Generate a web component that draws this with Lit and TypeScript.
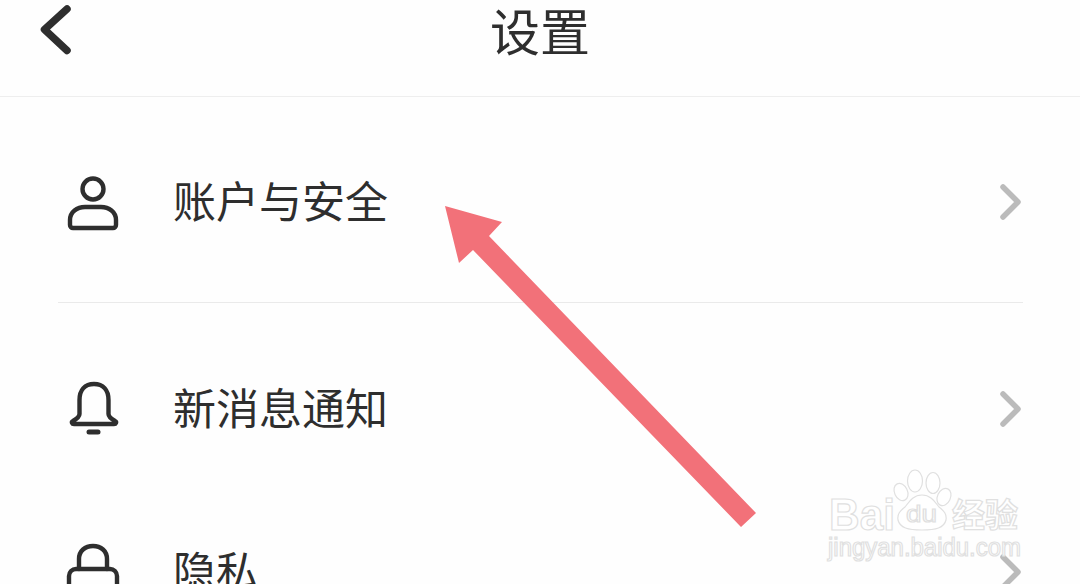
import { LitElement, css, html, svg } from 'lit'
import { customElement } from 'lit/decorators.js'

const personIcon = svg`<circle cx="29" cy="17" r="10.5"/><path d="M9 56h40a3 3 0 0 0 3-3v-5c0-8-7-13-15-13H21c-8 0-15 5-15 13v5a3 3 0 0 0 3 3z"/>`
const bellIcon = svg`<path d="M15.5 35V21c0-10 5.500-16 14.500-16s14.500 6 14.500 16v14c0 3 3 5 6.500 7 2 1 1 3-1 3H10c-2 0-3-2-1-3 3.500-2 6.500-4 6.500-7z"/><path d="M25 53h9" stroke-width="5"/>`
const lockIcon = svg`<path d="M15 27V17c0-8 6-13 14-13s14 5 14 13v10"/><rect x="5" y="27" width="48" height="40" rx="7"/>`

const rows = [
  { label: '账户与安全', icon: personIcon, cls: 'first' },
  { label: '新消息通知', icon: bellIcon, cls: 'second' },
  { label: '隐私', icon: lockIcon, cls: 'third' },
]

@customElement('app-root')
export class AppRoot extends LitElement {
  static styles = css`
    :host {
      display: block;
      position: relative;
      width: 1080px;
      height: 584px;
      overflow: hidden;
      background: #fefefe;
      color: #2e2e2e;
      font-family: "Noto Sans CJK SC", "Liberation Sans", sans-serif;
    }
    .bar {
      height: 96px;
      border-bottom: 1px solid #eee;
      display: flex;
      justify-content: center;
      position: relative;
    }
    .bar h1 {
      margin: 0;
      font-size: 50px;
      font-weight: 400;
      line-height: 58px;
    }
    .back {
      position: absolute;
      left: 30px;
      top: 0;
    }
    .row {
      display: flex;
      align-items: center;
      padding: 0 50px 0 64px;
    }
    .first { height: 200px; padding-top: 5px; }
    .second { height: 212px; }
    .third { height: 113px; }
    .icon {
      width: 60px;
      height: 60px;
      flex: none;
      overflow: visible;
      fill: none;
      stroke: #2e2e2e;
      stroke-width: 4.4;
      stroke-linecap: round;
      stroke-linejoin: round;
    }
    .label {
      margin-left: 49px;
      padding-bottom: 5px;
      flex: 1;
      font-size: 43px;
      line-height: 55px;
      font-weight: 400;
    }
    .more {
      width: 40px;
      height: 60px;
      flex: none;
      fill: none;
      stroke: #bbb;
      stroke-width: 5.5;
      stroke-linecap: round;
      stroke-linejoin: round;
    }
    .divider {
      height: 1px;
      margin: 0 57px 0 58px;
      background: #eaeaea;
    }
    .overlay {
      position: absolute;
      left: 0;
      top: 0;
      pointer-events: none;
    }
    .mark text {
      fill: #fff;
      stroke: #e0e0e0;
      stroke-width: 1.2;
      font-family: "Liberation Sans", "Noto Sans CJK SC", sans-serif;
    }
    .paw {
      fill: #fff;
      stroke: #e0e0e0;
      stroke-width: 1.2;
    }
  `

  private renderRow(row: { label: string; icon: unknown; cls: string }) {
    return html`
      <div class="row ${row.cls}">
        <svg class="icon" viewBox="0 0 60 60">${row.icon}</svg>
        <span class="label">${row.label}</span>
        <svg class="more" viewBox="0 0 40 60"><path d="M13 15l15 15-15 15"/></svg>
      </div>
    `
  }

  render() {
    return html`
      <div class="bar">
        <svg class="back" width="50" height="60" viewBox="0 0 50 60">
          <path d="M37 9L14.5 29.500 37 50.500" fill="none" stroke="#2e2e2e" stroke-width="7.500" stroke-linecap="round" stroke-linejoin="round"/>
        </svg>
        <h1>设置</h1>
      </div>
      ${this.renderRow(rows[0])}
      <div class="divider"></div>
      ${this.renderRow(rows[1])}
      ${this.renderRow(rows[2])}
      <svg class="overlay" width="1080" height="584" viewBox="0 0 1080 584">
        <g class="mark">
          <text x="829" y="530" font-size="45" font-weight="700" textLength="66" lengthAdjust="spacingAndGlyphs">Bai</text>
          <text x="952" y="527" font-size="33" font-weight="700">经验</text>
          <text x="828" y="556" font-size="25" textLength="193" lengthAdjust="spacingAndGlyphs">jingyan.baidu.com</text>
        </g>
        <g class="paw">
          <ellipse cx="915" cy="481" rx="7.500" ry="11"/>
          <ellipse cx="933" cy="483" rx="7" ry="10.500"/>
          <ellipse cx="901" cy="492" rx="6.500" ry="9" transform="rotate(-25 901 492)"/>
          <ellipse cx="944" cy="497" rx="6.500" ry="9" transform="rotate(25 944 497)"/>
          <path d="M922 495c9 0 13 7 17 12 5 4 8 7 7 13-2 8-10 10-24 10s-22-2-24-10c-1-6 2-9 7-13 4-5 8-12 17-12z"/>
        </g>
        <g class="mark">
          <text x="906" y="522" font-size="24" textLength="31" lengthAdjust="spacingAndGlyphs">du</text>
        </g>
        <path d="M445 206L502 222 489 236 756 513 741 527 473 250 459 263Z" fill="#f27179"/>
      </svg>
    `
  }
}
